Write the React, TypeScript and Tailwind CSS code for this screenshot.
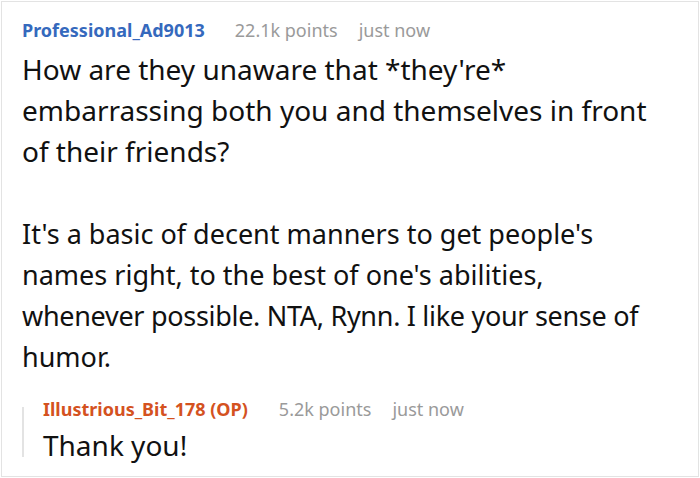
export default function App() {
  return (
    <div className="w-[700px] h-[478px] bg-white pt-[1px] pl-[1px]" style={{ fontFamily: '"Noto Sans", "Open Sans", sans-serif' }}>
      <div className="w-[698px] h-[476px] border border-[#e3e3e3] pl-[20px] pt-[16px]">
        {/* Top comment */}
        <div className="flex items-center text-[18px] leading-[24px]">
          <span className="font-bold text-[#3569bd]">Professional_Ad9013</span>
          <span className="ml-[30px] text-[#9a9a9a]">22.1k points</span>
          <span className="ml-[21px] text-[#9a9a9a]">just now</span>
        </div>
        <div className="mt-[7px] leading-[41px] text-[#111] w-[670px]">
          <p className="text-[28px]">
            How are they unaware that *they're*
            <br />
            embarrassing both you and themselves in front
            <br />
            of their friends?
          </p>
          <p className="mt-[41px] text-[27px]">
            It's a basic of decent manners to get people's
            <br />
            names right, to the best of one's abilities,
            <br />
            <span className="tracking-[-0.3px]">whenever possible. NTA, Rynn. I like your sense of</span>
            <br />
            humor.
          </p>
        </div>

        {/* Reply */}
        <div className="mt-[20px] flex">
          <div className="mt-[10px] h-[50px] w-[2px] bg-[#e3e3e3]" />
          <div className="pl-[19px]">
            <div className="flex items-center text-[18px] leading-[24px]">
              <span className="font-bold text-[#d4521f]">Illustrious_Bit_178 (OP)</span>
              <span className="ml-[31px] text-[#9a9a9a]">5.2k points</span>
              <span className="ml-[21px] text-[#9a9a9a]">just now</span>
            </div>
            <p className="text-[28px] leading-[48px] text-[#111]">Thank you!</p>
          </div>
        </div>
      </div>
    </div>
  );
}
